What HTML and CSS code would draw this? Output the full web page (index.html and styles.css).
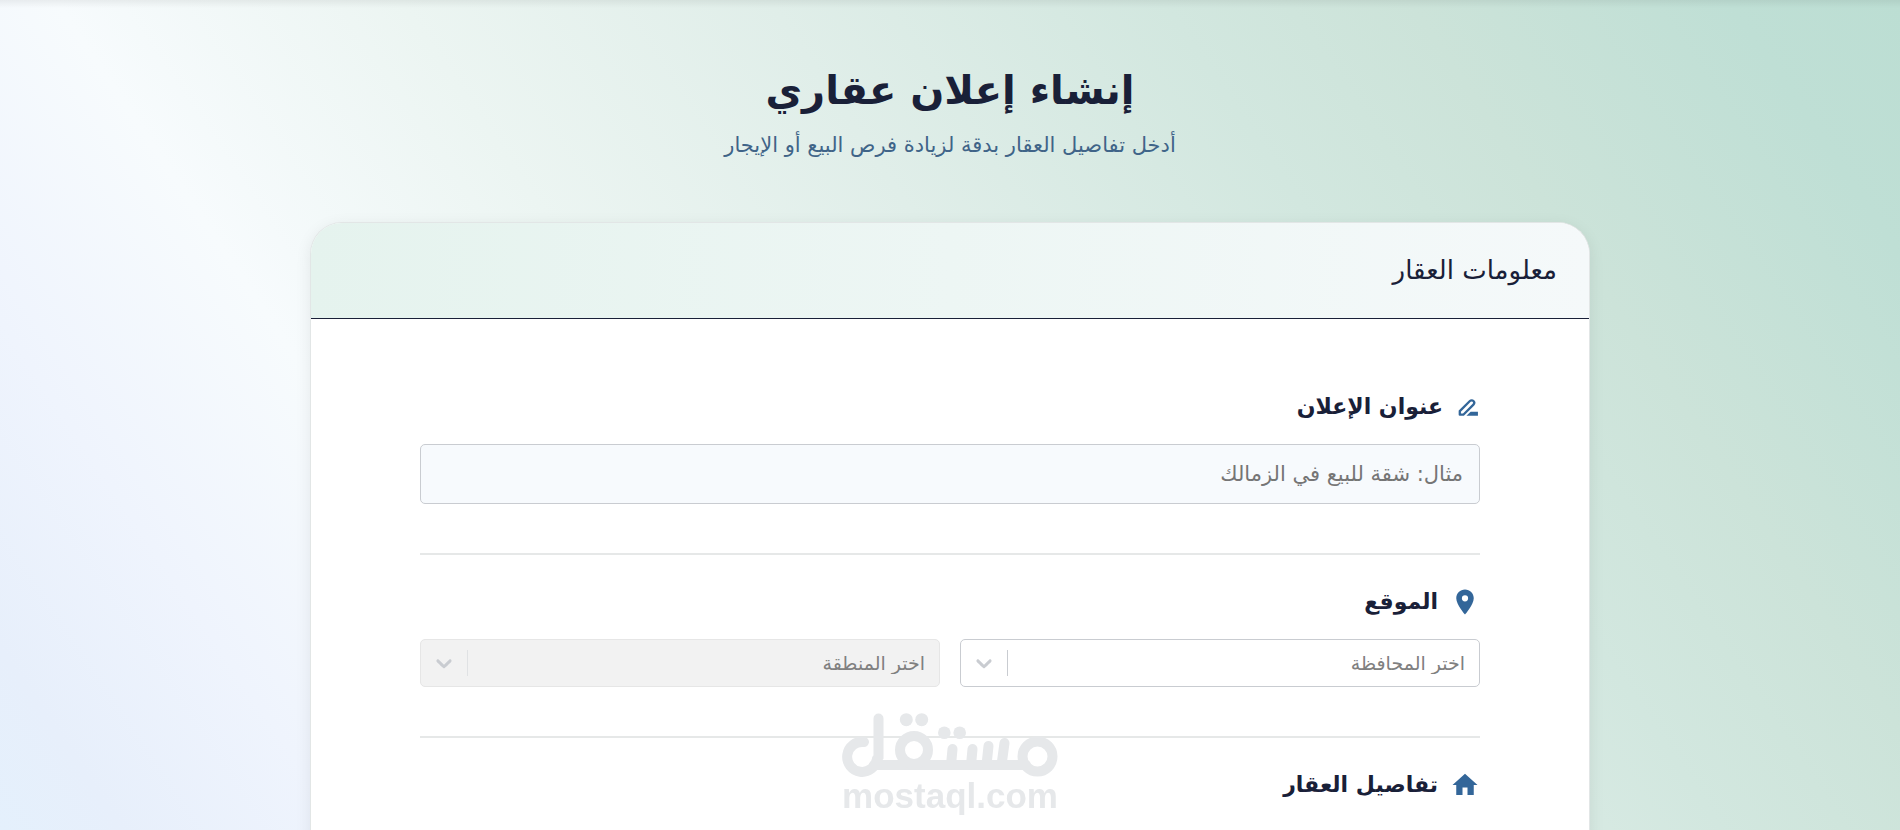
FILE: index.html
```html
<!DOCTYPE html>
<html lang="ar" dir="rtl">
<head>
    <meta charset="UTF-8">
    <meta name="viewport" content="width=device-width, initial-scale=1.0">
    <title>إنشاء إعلان عقاري</title>
    <link rel="stylesheet" href="styles.css">
</head>
<body>
    <main class="page">
        <header class="page-header">
            <h1 class="page-title">إنشاء إعلان عقاري</h1>
            <p class="page-subtitle">أدخل تفاصيل العقار بدقة لزيادة فرص البيع أو الإيجار</p>
        </header>

        <section class="card">
            <div class="card-header">معلومات العقار</div>

            <form class="card-body">
                <div class="form-section">
                    <label class="section-title" for="adTitle">
                        <svg class="icon icon-small" viewBox="0 0 24 24" aria-hidden="true">
                            <path fill="none" stroke="#336699" stroke-width="2.200" stroke-linejoin="round" d="M4.600 18.900V15.500L14.300 5.800a2.400 2.400 0 0 1 3.400 3.400L8 18.900z"/>
                            <path d="M11 20l4-4h7v4z"/>
                        </svg>
                        عنوان الإعلان
                    </label>
                    <input class="text-input" type="text" id="adTitle" placeholder="مثال: شقة للبيع في الزمالك">
                </div>

                <div class="form-section">
                    <h2 class="section-title">
                        <svg class="icon" viewBox="0 0 24 24" aria-hidden="true">
                            <path d="M12 2C8.130 2 5 5.130 5 9c0 5.250 7 13 7 13s7-7.750 7-13c0-3.870-3.130-7-7-7zm0 9.500a2.500 2.500 0 0 1 0-5 2.500 2.500 0 0 1 0 5z"/>
                        </svg>
                        الموقع
                    </h2>
                    <div class="select-row">
                        <div class="select-box">
                            <select aria-label="اختر المحافظة">
                                <option>اختر المحافظة</option>
                            </select>
                            <span class="indicator">
                                <svg class="chevron" viewBox="0 0 20 20" aria-hidden="true"><path d="M4.516 7.548c.436-.446 1.043-.481 1.576 0L10 11.295l3.908-3.747c.533-.481 1.141-.446 1.574 0 .436.445.408 1.197 0 1.615-.406.418-4.695 4.502-4.695 4.502a1.100 1.100 0 0 1-1.576 0S4.924 9.581 4.516 9.163s-.436-1.170 0-1.615z"/></svg>
                            </span>
                        </div>
                        <div class="select-box disabled">
                            <select aria-label="اختر المنطقة" disabled>
                                <option>اختر المنطقة</option>
                            </select>
                            <span class="indicator">
                                <svg class="chevron" viewBox="0 0 20 20" aria-hidden="true"><path d="M4.516 7.548c.436-.446 1.043-.481 1.576 0L10 11.295l3.908-3.747c.533-.481 1.141-.446 1.574 0 .436.445.408 1.197 0 1.615-.406.418-4.695 4.502-4.695 4.502a1.100 1.100 0 0 1-1.576 0S4.924 9.581 4.516 9.163s-.436-1.170 0-1.615z"/></svg>
                            </span>
                        </div>
                    </div>
                </div>

                <div class="form-section">
                    <h2 class="section-title">
                        <svg class="icon" viewBox="0 0 24 24" aria-hidden="true">
                            <path d="M10 20v-6h4v6h5v-8h3L12 3 2 12h3v8z"/>
                        </svg>
                        تفاصيل العقار
                    </h2>
                </div>
            </form>
        </section>
    </main>

    <div class="watermark">
        <svg class="watermark-logo" viewBox="0 0 216 66" role="img" aria-label="مستقل">
            <g fill="none" stroke="currentColor" stroke-width="10" stroke-linecap="round">
                <path d="M22 29A15 15 0 1 0 35 46L36.500 44V5.500"/>
                <path d="M32 52h152"/>
                <circle cx="72" cy="37" r="14"/>
                <path d="M109 52l1.500-16M129 52l1.500-16M144.500 52l2-19M159.500 52l3-22"/>
                <circle cx="195.500" cy="43.500" r="15"/>
            </g>
            <g fill="currentColor">
                <circle cx="64.300" cy="6.700" r="6.500"/>
                <circle cx="79.700" cy="6.700" r="6.500"/>
                <circle cx="102.300" cy="19.700" r="6.300"/>
                <circle cx="117.700" cy="19.700" r="6.300"/>
            </g>
        </svg>
        <span class="watermark-text">mostaql.com</span>
    </div>
</body>
</html>
```

FILE: styles.css
```css
* {
    box-sizing: border-box;
}

body {
    margin: 0;
    min-height: 100vh;
    font-family: "DejaVu Sans", sans-serif;
    color: #192038;
    background:
        linear-gradient(180deg, rgba(0, 0, 0, 0.06), transparent 8px),
        linear-gradient(236deg, #bcded3 0%, #bfdfd5 7%, #cce3d9 20%, #d2e7df 30%, #e0eee9 46%, #ecf5f2 61%, #f7fbfd 75%, #eff4fd 86%, #e7effb 95%, #e4f0fc 100%);
    background-attachment: fixed;
}

.page {
    padding: 56px 16px 0;
}

.page-header {
    text-align: center;
    margin-bottom: 56px;
}

.page-title {
    margin: 0;
    font-size: 40px;
    line-height: 68px;
    font-weight: bold;
}

.page-subtitle {
    margin: 0;
    font-size: 21px;
    line-height: 42px;
    color: #3f6488;
}

.card {
    max-width: 1280px;
    margin: 0 auto;
    background: #ffffff;
    border: 1px solid #e2e6e6;
    border-bottom: none;
    border-radius: 32px 32px 0 0;
    box-shadow: 0 4px 16px rgba(0, 0, 0, 0.08);
    overflow: hidden;
}

.card-header {
    padding: 24px 32px;
    font-size: 26px;
    line-height: 47px;
    background: linear-gradient(90deg, #e5f3ee, #f5f9fa);
    border-bottom: 1px solid #192038;
}

.card-body {
    padding: 73px 109px 80px;
}

.form-section + .form-section {
    margin-top: 49px;
    padding-top: 32px;
    border-top: 2px solid #e6e8e8;
}

.section-title {
    display: flex;
    align-items: center;
    gap: 12px;
    margin: 0 0 22px;
    font-size: 22px;
    line-height: 30px;
    font-weight: bold;
}

.icon {
    width: 30px;
    height: 30px;
    fill: #336699;
}

.icon-small {
    width: 25px;
    height: 25px;
}

.text-input {
    display: block;
    width: 100%;
    height: 60px;
    padding: 0 16px;
    font-family: inherit;
    font-size: 21px;
    color: #192038;
    background: #f7fafd;
    border: 1px solid #c9ccd1;
    border-radius: 5px;
}

.text-input::placeholder {
    color: #757575;
    opacity: 1;
}

.select-row {
    display: grid;
    grid-template-columns: 1fr 1fr;
    gap: 20px;
}

.select-box {
    position: relative;
    height: 48px;
    background: #ffffff;
    border: 1px solid #c9ccd1;
    border-radius: 5px;
}

.select-box select {
    width: 100%;
    height: 100%;
    padding: 0 14px 0 60px;
    appearance: none;
    font-family: inherit;
    font-size: 19px;
    color: #808080;
    background: transparent;
    border: none;
    opacity: 1;
}

/* arrow area drawn over the left end of the select */
.indicator {
    position: absolute;
    left: 0;
    top: 10px;
    bottom: 10px;
    width: 47px;
    display: flex;
    align-items: center;
    justify-content: center;
    border-right: 1px solid #c9ccd1;
    pointer-events: none;
}

.chevron {
    width: 26px;
    height: 26px;
    fill: #c9ccd1;
}

.select-box.disabled {
    background: #f2f2f2;
    border-color: #e6e6e6;
}

.disabled .indicator {
    border-color: #e0e2e4;
}

.watermark {
    position: fixed;
    left: 0;
    right: 0;
    bottom: 18px;
    display: flex;
    flex-direction: column;
    align-items: center;
    color: #e6e8ea;
    pointer-events: none;
}

.watermark-logo {
    width: 216px;
    height: 66px;
}

.watermark-text {
    direction: ltr;
    font-family: "Liberation Sans", Arial, sans-serif;
    font-size: 35px;
    line-height: 33px;
    font-weight: bold;
}
```
